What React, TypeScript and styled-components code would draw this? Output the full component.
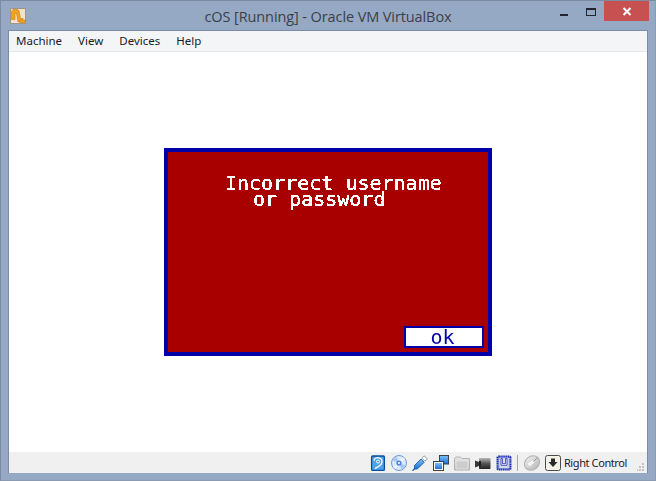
import styled, { createGlobalStyle } from "styled-components";

const GlobalStyle = createGlobalStyle`
  html, body {
    margin: 0;
    padding: 0;
    background: #95a9c4;
  }
`;

const Window = styled.div`
  box-sizing: border-box;
  width: 656px;
  height: 481px;
  display: flex;
  flex-direction: column;
  background: #95a9c4;
  border: 1px solid #7b8ba1;
  border-right-color: #8a9bb2;
  border-bottom-color: #8a9bb2;
  padding: 0 7px 7px 7px;
  overflow: hidden;
`;

const TitleBar = styled.div`
  height: 29px;
  flex: none;
  display: grid;
  grid-template-columns: 1fr auto 1fr;
`;

const AppIcon = styled.svg`
  width: 16px;
  height: 16px;
  margin: 7px 0 0 2px;
`;

const Title = styled.div`
  font: 14.5px/31px "Open Sans", "Noto Sans", sans-serif;
  color: #3b4048;
  letter-spacing: -0.1px;
`;

const CaptionButtons = styled.div`
  display: flex;
  justify-content: flex-end;
  align-items: flex-start;
  margin-right: -1px;
`;

const Minimize = styled.div`
  width: 8px;
  height: 2px;
  margin-top: 13px;
  margin-right: 18px;
  background: #22262c;
`;

const Maximize = styled.div`
  box-sizing: border-box;
  width: 10px;
  height: 8px;
  margin-top: 7px;
  margin-right: 8px;
  border: 1px solid #22262c;
  border-top-width: 2px;
`;

const CloseButton = styled.div`
  width: 45px;
  height: 20px;
  background: #c75050;
  display: flex;
  align-items: center;
  justify-content: center;
`;

const Client = styled.div`
  flex: 1;
  display: flex;
  flex-direction: column;
  border: 1px solid #7b8ba8;
  border-bottom: 0;
  min-height: 0;
`;

const MenuBar = styled.div`
  height: 20px;
  flex: none;
  display: flex;
  background: #f4f5f7;
  border-bottom: 1px solid #e6e7e9;
  padding-left: 7px;
  gap: 16px;
`;

const MenuItem = styled.div`
  font: 11.5px/20px "Noto Sans", "Open Sans", sans-serif;
  color: #1a1a2a;
`;

const Screen = styled.div`
  flex: 1;
  background: #ffffff;
  display: flex;
  align-items: center;
  justify-content: center;
`;

const Dialog = styled.div`
  box-sizing: border-box;
  width: 328px;
  height: 208px;
  background: #a80000;
  border: 4px solid #0000a8;
  display: flex;
  flex-direction: column;
`;

const Message = styled.div`
  font: 20px/16px "DejaVu Sans Mono", "Liberation Mono", monospace;
  color: #ffffff;
  white-space: pre;
  padding: 23px 0 0 57px;
  filter: url(#pixelate);
`;

const MessageIndent = styled.span`
  display: inline-block;
  width: 28px;
`;

const OkButton = styled.div`
  box-sizing: border-box;
  width: 80px;
  height: 22px;
  margin: auto 4px 4px auto;
  background: #ffffff;
  border: 2px solid #0000a8;
  display: flex;
  align-items: center;
  justify-content: center;
  padding-right: 3px;
  font: 20px/18px "DejaVu Sans Mono", "Liberation Mono", monospace;
  color: #0000a8;
  filter: url(#pixelate);
`;

const StatusBar = styled.div`
  height: 21px;
  flex: none;
  background: #f0f0f0;
  display: flex;
  align-items: center;
  justify-content: flex-end;
  padding-right: 20px;
  position: relative;
`;

const StatusIcon = styled.svg<{ $gap?: number }>`
  width: 16px;
  height: 16px;
  flex: none;
  margin-right: ${(p) => p.$gap ?? 5}px;
`;

const Separator = styled.div`
  width: 1px;
  height: 16px;
  background: #a6a6a6;
  margin: 0 6px 0 0;
`;

const HostKey = styled.div`
  font: 11px/16px "Noto Sans", "Open Sans", sans-serif;
  letter-spacing: -0.4px;
  color: #1a1a2a;
  margin-left: -2px;
`;

const Grip = styled.svg`
  position: absolute;
  right: 2px;
  bottom: 2px;
  width: 8px;
  height: 8px;
`;

function App() {
  return (
    <Window>
      <GlobalStyle />
      <svg width="0" height="0" style={{ position: "absolute" }}>
        <defs>
          <filter id="pixelate" x="0" y="0" width="100%" height="100%">
            <feComponentTransfer>
              <feFuncA type="discrete" tableValues="0 1 1 1" />
            </feComponentTransfer>
          </filter>
          <linearGradient id="blueFace" x1="0" y1="0" x2="0" y2="1">
            <stop offset="0" stopColor="#7cc0f5" />
            <stop offset="1" stopColor="#1670d8" />
          </linearGradient>
          <linearGradient id="greyFace" x1="0" y1="0" x2="0" y2="1">
            <stop offset="0" stopColor="#e8e8e8" />
            <stop offset="1" stopColor="#bdbdbd" />
          </linearGradient>
          <linearGradient id="camBody" x1="0" y1="0" x2="0" y2="1">
            <stop offset="0" stopColor="#b8b8b8" />
            <stop offset="0.5" stopColor="#555555" />
            <stop offset="1" stopColor="#222222" />
          </linearGradient>
        </defs>
      </svg>
      <TitleBar>
        <AppIcon viewBox="0 0 16 16">
          <rect x="0.5" y="0.5" width="15" height="15" fill="#efe3cd" stroke="#a39681" />
          <path d="M1.5 11.5V3.5L3 1.5h4.5L9 3l1.5 7.5H13V14H8L6.5 5H5v6.5z" fill="#f2a31f" stroke="#c9780f" strokeWidth="0.6" />
          <rect x="10" y="12" width="5" height="2.6" fill="#f2a31f" stroke="#c9780f" strokeWidth="0.5" />
        </AppIcon>
        <Title>cOS [Running] - Oracle VM VirtualBox</Title>
        <CaptionButtons>
          <Minimize />
          <Maximize />
          <CloseButton>
            <svg width="10" height="9" viewBox="0 0 10 9">
              <path d="M1.5 1l7 7M8.5 1l-7 7" stroke="#ffffff" strokeWidth="2" />
            </svg>
          </CloseButton>
        </CaptionButtons>
      </TitleBar>
      <Client>
        <MenuBar>
          <MenuItem>Machine</MenuItem>
          <MenuItem>View</MenuItem>
          <MenuItem>Devices</MenuItem>
          <MenuItem>Help</MenuItem>
        </MenuBar>
        <Screen>
          <Dialog>
            <Message>
              Incorrect username
              <br />
              <MessageIndent />
              or password
            </Message>
            <OkButton>ok</OkButton>
          </Dialog>
        </Screen>
        <StatusBar>
          {/* hard disk */}
          <StatusIcon viewBox="0 0 16 16">
            <rect x="1.6" y="1" width="12.8" height="14.4" rx="1" fill="#4fa3ea" stroke="#0a4f9e" strokeWidth="1.3" />
            <path d="M4 5.5C4.5 3 7 2.3 9 2.8c2.5.6 3.6 3 2.8 5.2-.6 1.8-2.3 2.5-3.5 3.6L5 13.6" fill="none" stroke="#ffffff" strokeWidth="1.3" />
            <circle cx="8" cy="6.6" r="1.5" fill="none" stroke="#ffffff" strokeWidth="1" />
          </StatusIcon>
          {/* optical disc */}
          <StatusIcon viewBox="0 0 16 16">
            <circle cx="8" cy="8" r="7.5" fill="#dbe9fa" stroke="#5f8fd6" strokeWidth="0.9" />
            <path d="M8 8L1.5 5.5a7 7 0 0 1 4-3.9zM8 8l6.5 2.5a7 7 0 0 1-4 3.9z" fill="#a9c8f2" />
            <path d="M8 8L14 4.2a7 7 0 0 0-2.2-2zM8 8l-6 3.8a7 7 0 0 0 2.2 2z" fill="#f3f7fd" />
            <circle cx="8" cy="8" r="2.6" fill="#4f86d8" />
            <circle cx="8" cy="8" r="1" fill="#ffffff" />
          </StatusIcon>
          {/* usb plug */}
          <StatusIcon viewBox="0 0 16 16">
            <path d="M2.5 10.5L9 4l3.2 3.2-6.4 6.4-2.3.6-1-1z" fill="url(#blueFace)" stroke="#0a4f9e" strokeWidth="0.8" />
            <path d="M0.5 15.7l2.4-2.2" stroke="#0a4f9e" strokeWidth="1.2" />
            <path d="M10 3.2l2-2.4 3.4 3.2-2.4 2.2z" fill="#ffffff" stroke="#75869c" strokeWidth="0.8" />
          </StatusIcon>
          {/* network */}
          <StatusIcon viewBox="0 0 16 16">
            <rect x="6.5" y="0.5" width="9" height="8.5" fill="url(#blueFace)" stroke="#3a4250" />
            <rect x="0.5" y="6.5" width="10" height="9" fill="#f4f6f8" stroke="#3a4250" />
            <rect x="2" y="8" width="7" height="6" fill="url(#blueFace)" />
          </StatusIcon>
          {/* shared folder */}
          <StatusIcon viewBox="0 0 16 16">
            <path d="M0.5 15V3.5L2 2h4.5L8 3.5h7.5V15z" fill="url(#greyFace)" stroke="#b2b2b2" />
            <path d="M2 14V6h12v8z" fill="#cdcdcd" stroke="#eeeeee" strokeWidth="0.6" />
          </StatusIcon>
          {/* video capture */}
          <StatusIcon viewBox="0 0 16 16">
            <path d="M0 5.5L4 7v4l-4 1.5z" fill="#3a3a3a" />
            <rect x="4" y="3" width="11.5" height="11" rx="0.8" fill="url(#camBody)" />
            <rect x="4" y="6" width="2" height="5.5" fill="#222222" />
          </StatusIcon>
          {/* virtualization */}
          <StatusIcon viewBox="0 0 16 16">
            <rect x="1.5" y="1.5" width="13" height="13" rx="1" fill="#aeb6ea" stroke="#1d2fb0" strokeWidth="2" strokeDasharray="1.4 0.5" />
            <rect x="3.5" y="3" width="9" height="10" fill="#d5d9f5" />
            <path d="M5 3.5v6.8h6V3.5H9.6v5.2H6.4V3.5z" fill="#ffffff" stroke="#1d2fb0" strokeWidth="0.8" />
          </StatusIcon>
          <Separator />
          {/* mouse capture */}
          <StatusIcon viewBox="0 0 16 16">
            <ellipse cx="8" cy="8" rx="8" ry="6.8" transform="rotate(-40 8 8)" fill="url(#greyFace)" stroke="#b0b0b0" />
            <path d="M8.5 7.5l5-5" stroke="#9a9a9a" />
            <path d="M3.5 8.5l5-3 2 2-5 4z" fill="#f4f4f4" />
          </StatusIcon>
          {/* host key */}
          <StatusIcon viewBox="0 0 16 16">
            <rect x="0.5" y="0.5" width="15" height="15" rx="2" fill="#f5f2ea" stroke="#4a4a4a" />
            <path d="M6 3.5h4V7h2.5L8 12 3.5 7H6z" fill="#2b2b2b" />
          </StatusIcon>
          <HostKey>Right Control</HostKey>
          <Grip viewBox="0 0 8 8">
            <path d="M5 0h2v2H5zM2 3h2v2H2zM5 3h2v2H5zM0 6h1v2H0zM2 6h2v2H2zM5 6h2v2H5z" fill="#c4c4c4" />
          </Grip>
        </StatusBar>
      </Client>
    </Window>
  );
}

export default App;
